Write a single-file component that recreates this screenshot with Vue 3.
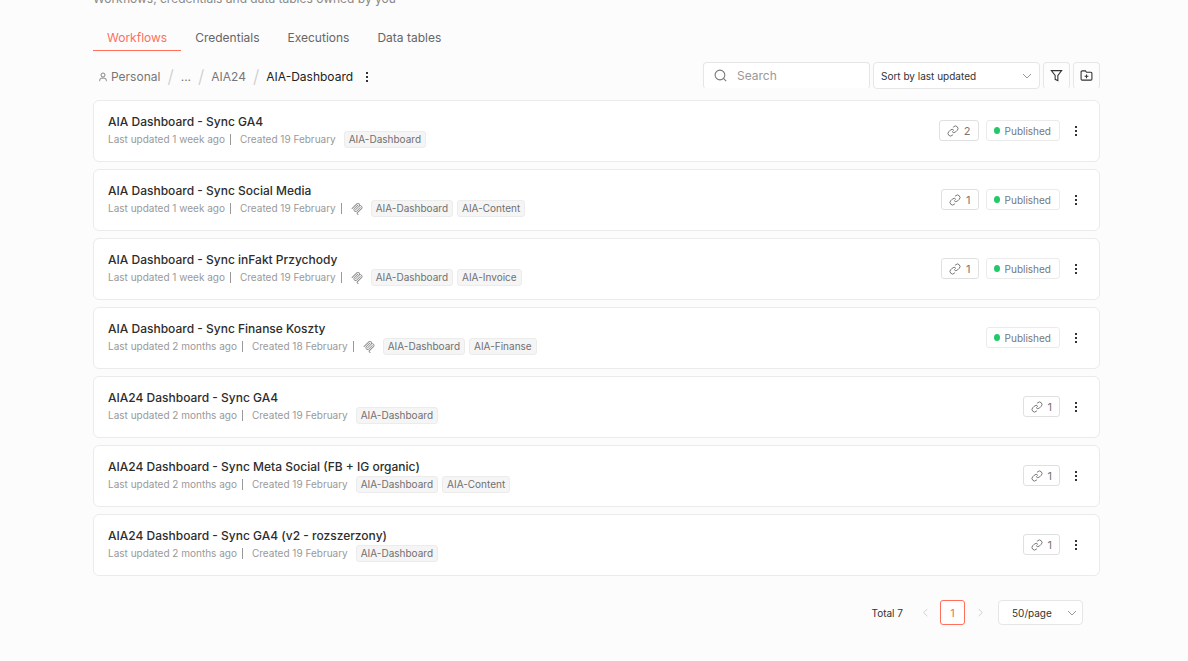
<template>
    <main class="page">
        <header class="page-header">
            <p>Workflows, credentials and data tables owned by you</p>
        </header>

        <nav class="tabs">
            <a v-for="(tab, index) in tabs" :key="tab" href="#" class="tab" :class="{ active: activeTab === index }"
                @click.prevent="activeTab = index">{{ tab }}</a>
        </nav>

        <div class="toolbar">
            <nav class="breadcrumbs" aria-label="Folders">
                <a href="#" class="crumb home">
                    <svg class="person" viewBox="3 2 18 21">
                        <circle cx="12" cy="8" r="4.500" />
                        <path d="M4.500 22v-2a5 5 0 0 1 5-5h5a5 5 0 0 1 5 5v2" />
                    </svg>
                    Personal
                </a>
                <span class="slash">/</span>
                <button type="button" class="crumb more">...</button>
                <span class="slash">/</span>
                <a href="#" class="crumb">AIA24</a>
                <span class="slash">/</span>
                <span class="crumb current">AIA-Dashboard</span>
                <button type="button" class="dots" aria-label="Folder actions">
                    <svg viewBox="0 0 4 12">
                        <rect x="1" y="1" width="2" height="2" />
                        <rect x="1" y="5" width="2" height="2" />
                        <rect x="1" y="9" width="2" height="2" />
                    </svg>
                </button>
            </nav>

            <div class="filters">
                <label class="search">
                    <svg viewBox="0 0 24 24">
                        <circle cx="11" cy="11" r="9" />
                        <path d="m22.500 22.500-5-5" />
                    </svg>
                    <input v-model="search" type="text" placeholder="Search" aria-label="Search" />
                </label>
                <div class="select sort">
                    <select v-model="sort" aria-label="Sort">
                        <option value="updated">Sort by last updated</option>
                        <option value="created">Sort by last created</option>
                        <option value="name">Sort by name (A-Z)</option>
                    </select>
                    <svg viewBox="0 0 10 10"><path d="m1 3 4 4 4-4" /></svg>
                </div>
                <button type="button" class="icon-button" aria-label="Filters">
                    <svg viewBox="0 0 24 24">
                        <path d="M2.500 3h19l-7 9v9.500l-5-2.500v-7z" />
                    </svg>
                </button>
                <button type="button" class="icon-button" aria-label="Add folder">
                    <svg viewBox="0 0 24 24">
                        <path d="M12 10v7M8.500 13.500h7" />
                        <path d="M20 20.500a2 2 0 0 0 2-2V8a2 2 0 0 0-2-2h-8L10 3.500H4a2 2 0 0 0-2 2v13a2 2 0 0 0 2 2z" />
                    </svg>
                </button>
            </div>
        </div>

        <ul class="workflows">
            <li v-for="workflow in workflows" :key="workflow.name" class="card">
                <div class="info">
                    <h2>{{ workflow.name }}</h2>
                    <div class="meta">
                        <span class="updated">Last updated {{ workflow.updated }} ago</span>
                        <span class="bar"></span>
                        <span class="created">Created {{ workflow.created }}</span>
                        <template v-if="workflow.mcp">
                            <span class="bar"></span>
                            <svg class="mcp" viewBox="0 0 24 24">
                                <path
                                    d="M13.85 0a4.16 4.16 0 0 0-2.95 1.217L1.456 10.66a.835.835 0 0 0 0 1.18.835.835 0 0 0 1.18 0l9.442-9.442a2.49 2.49 0 0 1 3.541 0 2.49 2.49 0 0 1 0 3.541L8.59 12.97l-.1.1a.835.835 0 0 0 0 1.18.835.835 0 0 0 1.18 0l.1-.098 7.03-7.034a2.49 2.49 0 0 1 3.542 0l.049.05a2.49 2.49 0 0 1 0 3.54l-8.54 8.54a1.96 1.96 0 0 0 0 2.755l1.753 1.753a.835.835 0 0 0 1.18 0 .835.835 0 0 0 0-1.18l-1.753-1.753a.266.266 0 0 1 0-.394l8.54-8.54a4.185 4.185 0 0 0 0-5.9l-.049-.05a4.16 4.16 0 0 0-2.95-1.218c-.2 0-.401.02-.6.048a4.17 4.17 0 0 0-1.17-3.552A4.16 4.16 0 0 0 13.85 0m0 3.333a.84.84 0 0 0-.59.245L6.275 10.56a4.186 4.186 0 0 0 0 5.902 4.186 4.186 0 0 0 5.902 0L19.16 9.48a.835.835 0 0 0 0-1.18.835.835 0 0 0-1.18 0l-6.985 6.984a2.49 2.49 0 0 1-3.54 0 2.49 2.49 0 0 1 0-3.54l6.983-6.985a.835.835 0 0 0 0-1.18.84.84 0 0 0-.59-.245" />
                            </svg>
                        </template>
                        <span class="tags">
                            <span v-for="tag in workflow.tags" :key="tag" class="tag">{{ tag }}</span>
                        </span>
                    </div>
                </div>
                <div class="actions">
                    <button v-if="workflow.links" type="button" class="links" aria-label="Linked resources">
                        <svg viewBox="0 0 24 24">
                            <path d="M10 13a5 5 0 0 0 7.540.540l3-3a5 5 0 0 0-7.070-7.070l-1.720 1.710" />
                            <path d="M14 11a5 5 0 0 0-7.540-.540l-3 3a5 5 0 0 0 7.070 7.070l1.710-1.710" />
                        </svg>
                        {{ workflow.links }}
                    </button>
                    <span v-if="workflow.published" class="published">Published</span>
                    <button type="button" class="dots" aria-label="Workflow actions">
                        <svg viewBox="0 0 4 12">
                            <rect x="1" y="1" width="2" height="2" />
                            <rect x="1" y="5" width="2" height="2" />
                            <rect x="1" y="9" width="2" height="2" />
                        </svg>
                    </button>
                </div>
            </li>
        </ul>

        <footer class="pagination">
            <span class="total">Total {{ workflows.length }}</span>
            <button type="button" class="arrow" aria-label="Previous page" disabled>
                <svg viewBox="0 0 10 10"><path d="M7 1 3 5l4 4" /></svg>
            </button>
            <button type="button" class="page-number">1</button>
            <button type="button" class="arrow" aria-label="Next page" disabled>
                <svg viewBox="0 0 10 10"><path d="m3 1 4 4-4 4" /></svg>
            </button>
            <div class="select size">
                <select v-model="pageSize" aria-label="Page size">
                    <option :value="10">10/page</option>
                    <option :value="25">25/page</option>
                    <option :value="50">50/page</option>
                </select>
                <svg viewBox="0 0 10 10"><path d="m1 3 4 4 4-4" /></svg>
            </div>
        </footer>
    </main>
</template>

<script setup>
import { ref } from 'vue';

const tabs = ['Workflows', 'Credentials', 'Executions', 'Data tables'];
const activeTab = ref(0);
const search = ref('');
const sort = ref('updated');
const pageSize = ref(50);

const workflows = ref([
    { name: 'AIA Dashboard - Sync GA4', updated: '1 week', created: '19 February', tags: ['AIA-Dashboard'], links: 2, published: true },
    { name: 'AIA Dashboard - Sync Social Media', updated: '1 week', created: '19 February', mcp: true, tags: ['AIA-Dashboard', 'AIA-Content'], links: 1, published: true },
    { name: 'AIA Dashboard - Sync inFakt Przychody', updated: '1 week', created: '19 February', mcp: true, tags: ['AIA-Dashboard', 'AIA-Invoice'], links: 1, published: true },
    { name: 'AIA Dashboard - Sync Finanse Koszty', updated: '2 months', created: '18 February', mcp: true, tags: ['AIA-Dashboard', 'AIA-Finanse'], published: true },
    { name: 'AIA24 Dashboard - Sync GA4', updated: '2 months', created: '19 February', tags: ['AIA-Dashboard'], links: 1 },
    { name: 'AIA24 Dashboard - Sync Meta Social (FB + IG organic)', updated: '2 months', created: '19 February', tags: ['AIA-Dashboard', 'AIA-Content'], links: 1 },
    { name: 'AIA24 Dashboard - Sync GA4 (v2 - rozszerzony)', updated: '2 months', created: '19 February', tags: ['AIA-Dashboard'], links: 1 },
]);
</script>

<style>
body {
    background: #fcfcfc;
}
</style>

<style scoped>
* {
    box-sizing: border-box;
}

.page {
    padding: 0 88px 36px 93px;
    font-family: Inter, "Liberation Sans", sans-serif;
    font-size: 12px;
    color: #333;
}

button,
input,
select {
    margin: 0;
    padding: 0;
    border: 0;
    background: none;
    font: inherit;
    color: inherit;
    outline: none;
}

a {
    color: inherit;
    text-decoration: none;
}

svg {
    flex: none;
    fill: none;
    stroke: currentColor;
    stroke-width: 2;
}

.page-header {
    display: flex;
    align-items: flex-end;
    height: 7px;
    overflow: hidden;
}

.page-header p {
    margin: 0;
    line-height: 16px;
    color: #888;
}

.tabs {
    display: flex;
    margin-top: 19px;
}

.tab {
    padding: 4px 14px 5px;
    border-bottom: 1px solid transparent;
    line-height: 15px;
    color: #666;
}

.tab.active {
    color: #ff6f5c;
    border-bottom: 1px solid #ff6f5c;
}

.toolbar {
    display: flex;
    justify-content: space-between;
    align-items: center;
    margin-top: 11px;
}

.breadcrumbs {
    display: flex;
    align-items: center;
    padding: 2px 0 0 6px;
    line-height: 18px;
    color: #777;
}

.home {
    display: flex;
    align-items: center;
    gap: 4px;
}

.person {
    width: 8px;
    height: 10px;
}

.slash {
    padding: 0 7px;
    font-size: 18px;
    font-weight: 300;
    color: #ccc;
}

.current {
    color: #222;
}

.dots {
    display: flex;
    justify-content: center;
    align-items: center;
    width: 20px;
    height: 20px;
    margin-left: 4px;
    color: #333;
}

.dots svg {
    width: 4px;
    height: 12px;
    fill: currentColor;
    stroke: none;
}

.filters {
    display: flex;
    gap: 3px;
}

.search,
.select,
.icon-button {
    display: flex;
    align-items: center;
    height: 27px;
    border: 1px solid #e6e6e6;
    border-radius: 4px;
    background: #fff;
}

.search,
.sort {
    width: 167px;
}

.search {
    gap: 10px;
    padding: 0 10px;
    border-bottom-color: #fcfcfc;
}

.search svg {
    width: 13px;
    height: 13px;
    color: #777;
}

.search input {
    flex: 1;
    min-width: 0;
}

.search input::placeholder {
    color: #999;
}

.select {
    display: grid;
}

.select select,
.select svg {
    grid-area: 1 / 1;
}

.select select {
    width: 100%;
    height: 25px;
    padding: 0 24px 0 7px;
    appearance: none;
    font-size: 10px;
}

.select svg {
    justify-self: end;
    width: 10px;
    height: 10px;
    margin-right: 7px;
    stroke-width: 1;
    color: #999;
    pointer-events: none;
}

.icon-button {
    justify-content: center;
    width: 27px;
    border-bottom-color: #fcfcfc;
    background: #fdfdfd;
}

.icon-button svg {
    width: 13px;
    height: 13px;
}

.workflows {
    display: flex;
    flex-direction: column;
    gap: 7px;
    margin: 11px 0 0;
    padding: 0;
    list-style: none;
}

.card {
    display: flex;
    justify-content: space-between;
    align-items: center;
    padding: 12px 13px 13px 14px;
    border: 1px solid #ebebeb;
    border-radius: 6px;
    background: #fff;
}

h2 {
    margin: 0;
    font-size: 12px;
    font-weight: 500;
    line-height: 18px;
    color: #2d2d2d;
}

.meta {
    display: flex;
    align-items: center;
    height: 17px;
    font-size: 10px;
    line-height: 15px;
    color: #999;
}

.bar {
    width: 1px;
    height: 11px;
    margin: 0 9px 0 5px;
    background: #999;
}

.mcp {
    width: 12px;
    height: 12px;
    fill: #888;
    stroke: none;
}

.tags {
    display: flex;
    gap: 4px;
    margin-left: 8px;
}

.tag {
    padding: 0 4px;
    border: 1px solid #ececec;
    border-radius: 3px;
    background: #f5f5f5;
    color: #707070;
}

.actions {
    display: flex;
    align-items: center;
    gap: 7px;
}

.actions .dots {
    margin-left: -1px;
}

.links,
.published {
    display: flex;
    align-items: center;
    height: 21px;
    border: 1px solid #e0e0e0;
    border-radius: 3px;
    padding: 0 7px;
    color: #777;
}

.links {
    gap: 5px;
    font-size: 11px;
}

.links svg {
    width: 12px;
    height: 12px;
}

.published {
    gap: 5px;
    padding-right: 8px;
    border-color: #ebebeb;
    font-size: 10px;
}

.published::before {
    content: "";
    width: 6px;
    height: 7px;
    border-radius: 50%;
    background: #22c969;
}

.pagination {
    display: flex;
    justify-content: flex-end;
    align-items: center;
    margin-top: 24px;
    padding-right: 17px;
    font-size: 10px;
}

.arrow {
    display: flex;
    justify-content: center;
    width: 10px;
    margin: 0 10px;
    color: #ccc;
}

.arrow svg {
    width: 9px;
    height: 9px;
    stroke-width: 1;
}

.total {
    margin-right: 7px;
}

.page-number {
    width: 25px;
    height: 25px;
    border: 1px solid #ff6f5c;
    border-radius: 3px;
    background: #fff;
    font-weight: 500;
    color: #ff6f5c;
}

.size {
    width: 85px;
    height: 25px;
    margin-left: 3px;
}

.size select {
    height: 23px;
    padding-left: 13px;
}

.size svg {
    margin-right: 5px;
}
</style>
